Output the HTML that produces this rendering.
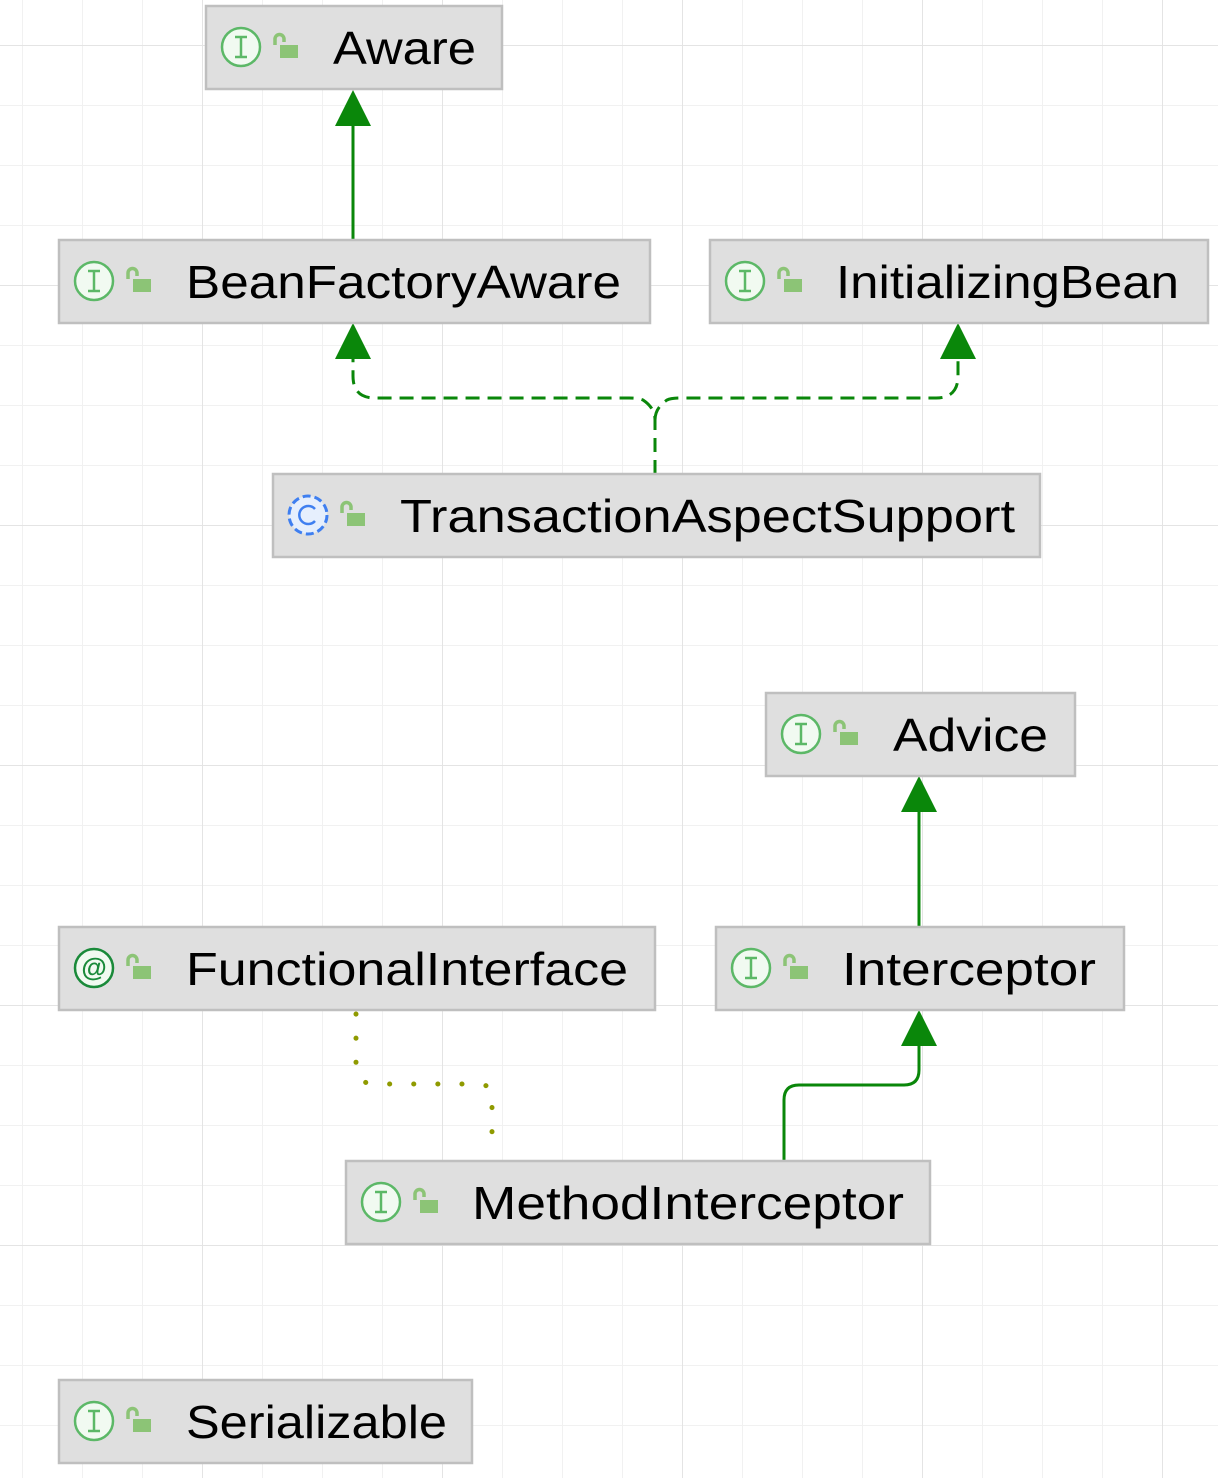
<!DOCTYPE html>
<html><head><meta charset="utf-8"><style>
html,body{margin:0;padding:0;background:#fff;}
svg{display:block;}
text{font-family:"Liberation Sans",sans-serif;}
</style></head><body>
<svg width="1218" height="1478" viewBox="0 0 1218 1478" xmlns="http://www.w3.org/2000/svg">
<defs>
<pattern id="minor" x="22" y="45" width="60" height="60" patternUnits="userSpaceOnUse">
<path d="M0 0V60M0 0H60" stroke="#f1f1f1" stroke-width="2" fill="none"/>
</pattern>
<pattern id="major" x="202" y="45" width="240" height="240" patternUnits="userSpaceOnUse">
<path d="M0 0V240M0 0H240" stroke="#e4e4e4" stroke-width="2" fill="none"/>
</pattern>
<g id="lock">
<path d="M69 39V33a4.5 4.5 0 0 1 9 0v3" stroke="#8cc476" stroke-width="3.5" fill="none"/>
<rect x="74" y="39" width="18" height="13" fill="#8cc476"/>
</g>
<g id="iicon">
<circle cx="35" cy="41" r="19" fill="#f1faf1" stroke="#5cb867" stroke-width="2.5"/>
<path d="M29 31H41M29 51H41M35 31V51" stroke="#5cb867" stroke-width="2.5" fill="none"/>
<use href="#lock"/>
</g>
</defs>
<rect width="1218" height="1478" fill="#fff"/>
<rect width="1218" height="1478" fill="url(#minor)"/>
<rect width="1218" height="1478" fill="url(#major)"/>

<g stroke="#0a870a" stroke-width="3" fill="none">
<path d="M353 240V120"/>
<path d="M919 927V806"/>
<path d="M784 1161V1100q0-15 15-15H904q15 0 15-15V1040"/>
<path d="M655 474V420q0-12 -12-20q-4-2-14-2H375q-22 0-22-22V355" stroke-dasharray="14,8"/>
<path d="M655 420q0-12 12-20q4-2 14-2H936q22 0 22-22V355" stroke-dasharray="14,8"/>
</g>
<g fill="#0a870a">
<path d="M353 90L335 126H371Z"/>
<path d="M919 776L901 812H937Z"/>
<path d="M919 1010L901 1046H937Z"/>
<path d="M353 323L335 359H371Z"/>
<path d="M958 323L940 359H976Z"/>
</g>
<path d="M356 1014V1065q0 19 19 19H478q14 0 14 14V1145" stroke="#8f9a00" stroke-width="5" stroke-dasharray="0.1,24" stroke-linecap="round" fill="none"/>

<g stroke="#bfbfbf" stroke-width="2.5" fill="#dfdfdf">
<rect x="206" y="6" width="296" height="83"/>
<rect x="59" y="240" width="591" height="83"/>
<rect x="710" y="240" width="498" height="83"/>
<rect x="273" y="474" width="767" height="83"/>
<rect x="766" y="693" width="309" height="83"/>
<rect x="59" y="927" width="596" height="83"/>
<rect x="716" y="927" width="408" height="83"/>
<rect x="346" y="1161" width="584" height="83"/>
<rect x="59" y="1380" width="413" height="83"/>
</g>

<use href="#iicon" x="206" y="6"/>
<use href="#iicon" x="59" y="240"/>
<use href="#iicon" x="710" y="240"/>
<use href="#iicon" x="766" y="693"/>
<use href="#iicon" x="716" y="927"/>
<use href="#iicon" x="346" y="1161"/>
<use href="#iicon" x="59" y="1380"/>

<g transform="translate(273,474)">
<circle cx="35" cy="41" r="19" fill="#e6effd" stroke="#3f7ff0" stroke-width="3" stroke-dasharray="8,4"/>
<path d="M42 35a9 9 0 1 0 0 12" stroke="#3f7ff0" stroke-width="2.5" fill="none"/>
<use href="#lock"/>
</g>
<g transform="translate(59,927)">
<circle cx="35" cy="41" r="19" fill="#f1faf1" stroke="#1a8a3a" stroke-width="2.5"/>
<text x="35" y="49" font-size="26" fill="#1a8a3a" text-anchor="middle" font-weight="bold">@</text>
<use href="#lock"/>
</g>

<g font-size="46" fill="#000">
<text x="333" y="64" textLength="143" lengthAdjust="spacingAndGlyphs">Aware</text>
<text x="186" y="298" textLength="435" lengthAdjust="spacingAndGlyphs">BeanFactoryAware</text>
<text x="836" y="298" textLength="343" lengthAdjust="spacingAndGlyphs">InitializingBean</text>
<text x="400" y="532" textLength="615" lengthAdjust="spacingAndGlyphs">TransactionAspectSupport</text>
<text x="893" y="751" textLength="155" lengthAdjust="spacingAndGlyphs">Advice</text>
<text x="186" y="985" textLength="442" lengthAdjust="spacingAndGlyphs">FunctionalInterface</text>
<text x="842" y="985" textLength="254" lengthAdjust="spacingAndGlyphs">Interceptor</text>
<text x="472" y="1219" textLength="432" lengthAdjust="spacingAndGlyphs">MethodInterceptor</text>
<text x="186" y="1438" textLength="261" lengthAdjust="spacingAndGlyphs">Serializable</text>
</g>
</svg>
</body></html>
